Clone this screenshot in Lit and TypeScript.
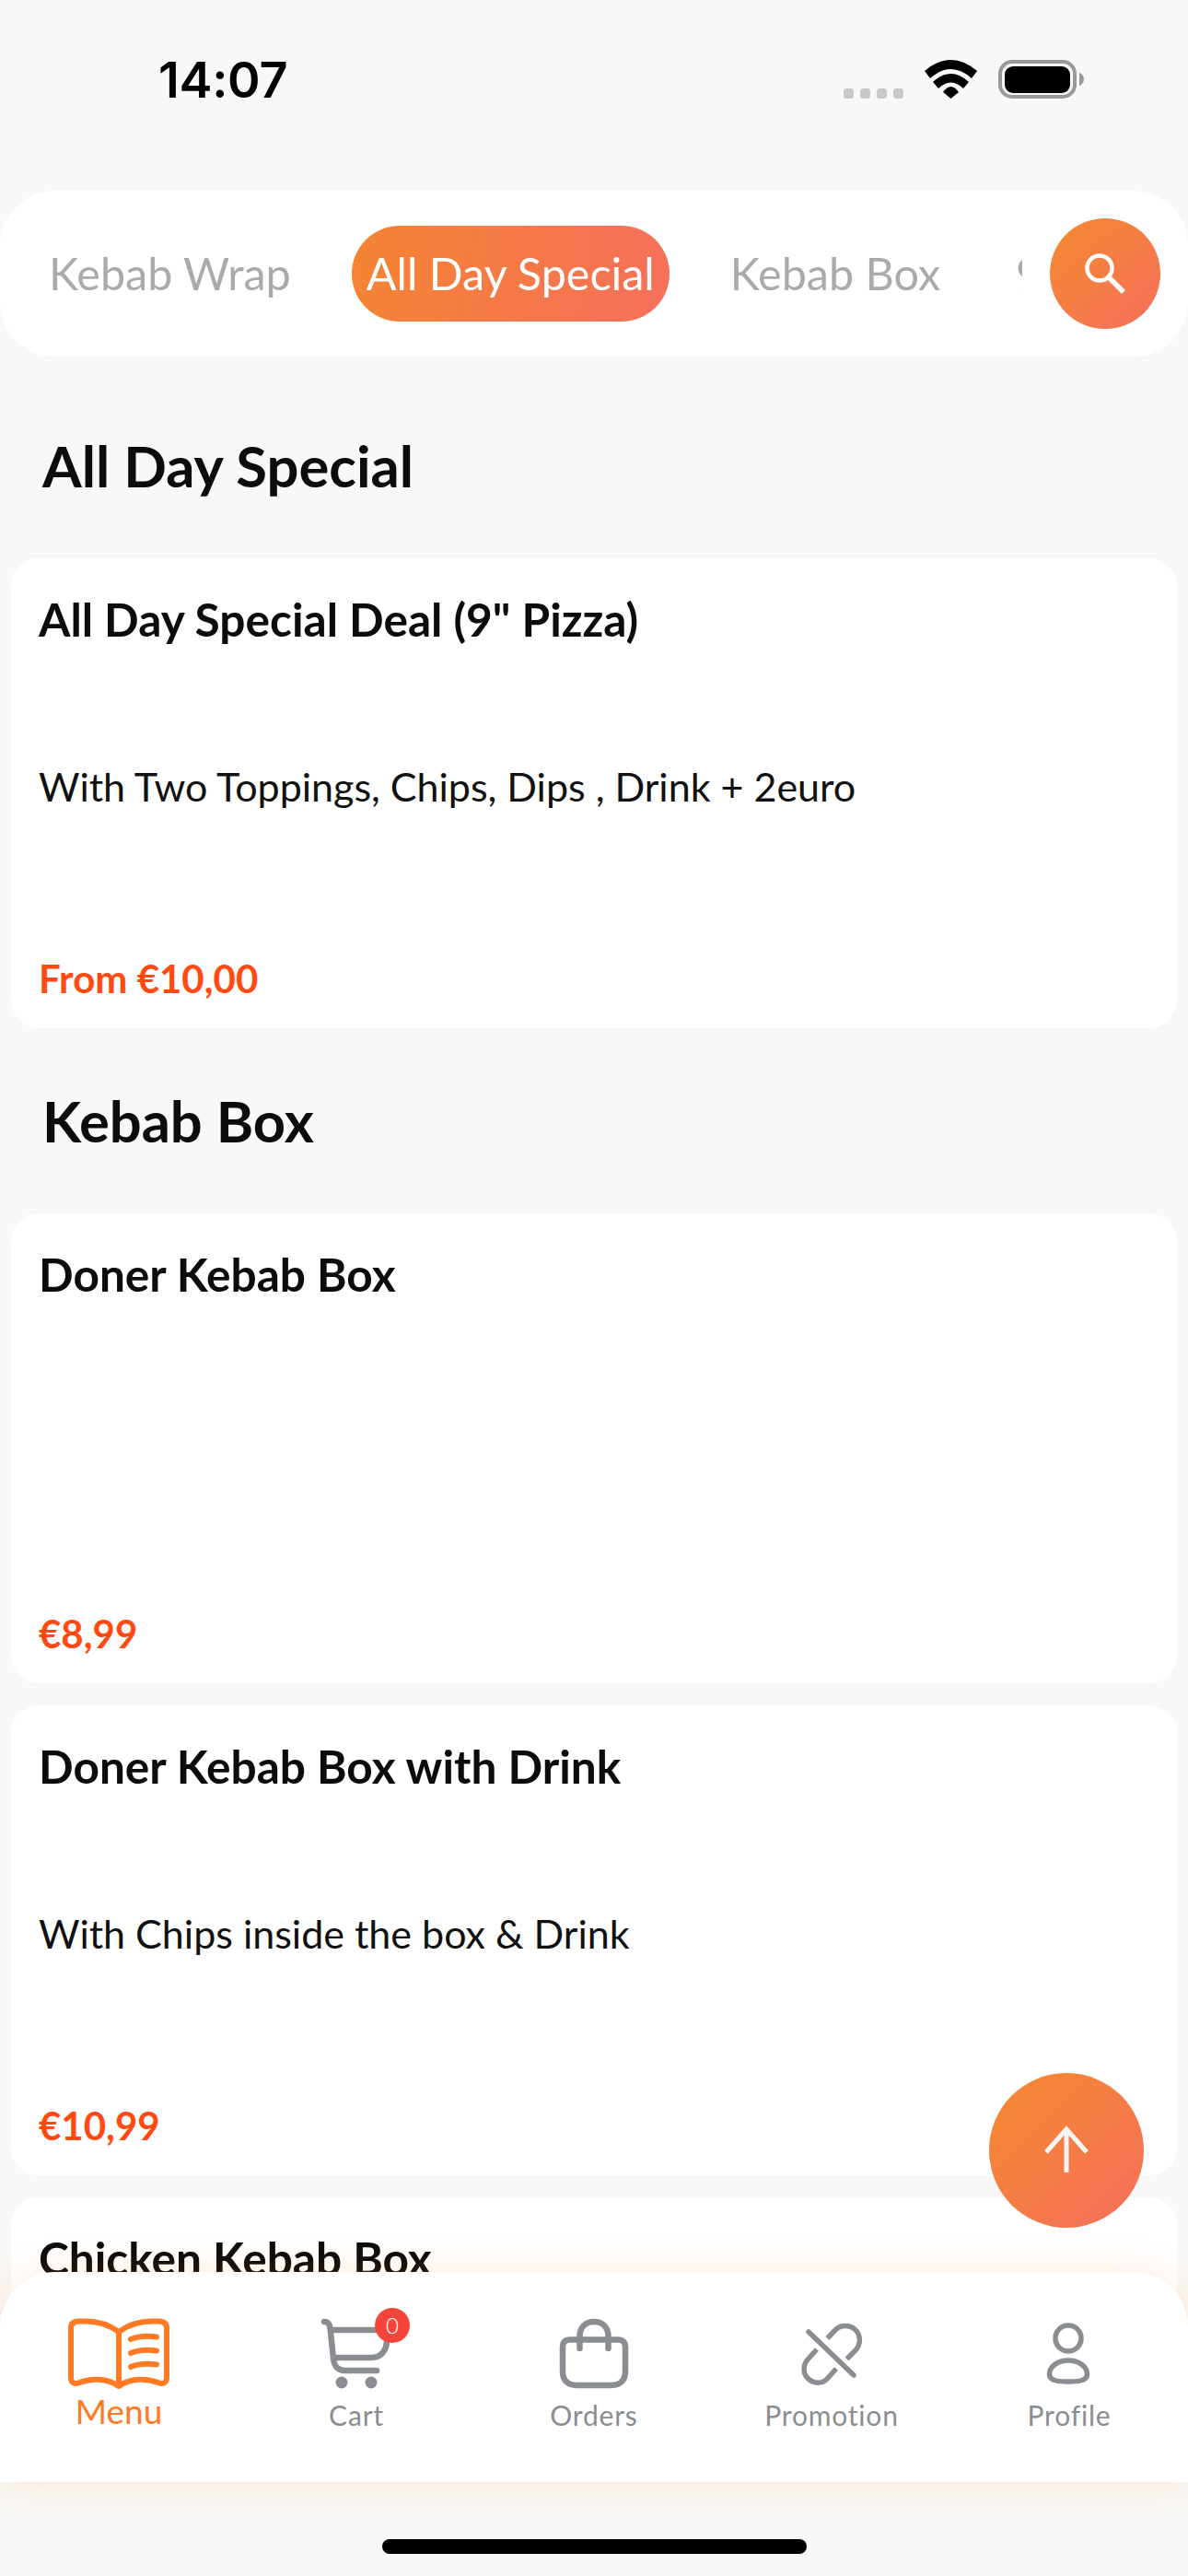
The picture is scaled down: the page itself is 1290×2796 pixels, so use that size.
import { LitElement, html, css, svg } from "lit";
import { customElement } from "lit/decorators.js";

const sections = [
  { name: "All Day Special", items: [
    { t: 'All Day Special Deal (9" Pizza)', d: "With Two Toppings, Chips, Dips , Drink + 2euro", p: "From €10,00" },
  ]},
  { name: "Kebab Box", items: [
    { t: "Doner Kebab Box", d: "", p: "€8,99" },
    { t: "Doner Kebab Box with Drink", d: "With Chips inside the box & Drink", p: "€10,99" },
    { t: "Chicken Kebab Box", d: "", p: "" },
  ]},
];

const icons: Record<string, unknown> = {
  menu: svg`<g fill="none" stroke="#ff7a22" stroke-width="6" stroke-linecap="round" stroke-linejoin="round">
    <path d="M129 2531 C118 2523 106 2519.500 93 2519.500 H86 C80 2519.500 77 2522 77 2527 V2581 C77 2586 81 2588 85 2586.500 C99 2581 116 2581 129 2590 C142 2581 159 2581 173 2586.500 C177 2588 181 2586 181 2581 V2527 C181 2522 178 2519.500 172 2519.500 H165 C152 2519.500 140 2523 129 2531 V2590"/>
    <path d="M142 2539 C150 2535.500 160 2535 170 2536.500"/><path d="M142 2554 C150 2550.500 160 2550 170 2551.500"/><path d="M142 2569 C150 2565.500 160 2565 170 2566.500"/></g>`,
  cart: svg`<g fill="none" stroke="#8a8d91" stroke-width="6.500" stroke-linecap="round" stroke-linejoin="round">
    <path d="M352 2520 C357 2520 358 2523 358.500 2527 L362 2560 C363 2569 367 2573 375 2573 H409"/>
    <path d="M360 2529 H420 V2540 C420 2551 414 2559 403 2559 H363"/></g>
    <circle cx="371" cy="2586" r="6.500" fill="#8a8d91"/><circle cx="403" cy="2586" r="6.500" fill="#8a8d91"/>`,
  orders: svg`<g fill="none" stroke="#8a8d91" stroke-width="6.500" stroke-linecap="round" stroke-linejoin="round">
    <path d="M619 2539.500 H671 C676 2539.500 679 2542 679 2547 V2574 C679 2584 673 2589 664 2589 H626 C617 2589 611 2584 611 2574 V2547 C611 2542 614 2539.500 619 2539.500 Z"/>
    <path d="M629.500 2549 V2536 C629.500 2526 636 2520 645 2520 C654 2520 660.500 2526 660.500 2536 V2549"/></g>`,
  promotion: svg`<g fill="none" stroke="#8a8d91" stroke-width="5.500" stroke-linejoin="round">
    <path d="M878 2531 L927 2578" stroke-linecap="round"/>
    <path d="M898.500 2538 L906 2530 C912 2523 922 2523 928 2528 C935 2534 935 2544 929 2551 L919.500 2560.500"/>
    <path d="M887 2550 L877 2561 C871 2568 872 2578 879 2583 C886 2588 894 2587 899 2581 L908 2571"/></g>`,
  profile: svg`<g fill="none" stroke="#8a8d91" stroke-width="5.500">
    <circle cx="1160" cy="2538" r="14"/>
    <path d="M1160 2562 C1148 2562 1139.500 2569 1139.500 2577 C1139.500 2583 1145 2585 1160 2585 C1175 2585 1180.500 2583 1180.500 2577 C1180.500 2569 1172 2562 1160 2562 Z"/></g>`,
};

const nav = [
  { k: "menu", l: "Menu", vb: "74 2515 110 79", w: 110, on: true },
  { k: "cart", l: "Cart", vb: "342 2515 90 79", w: 90, badge: true },
  { k: "orders", l: "Orders", vb: "600 2515 90 79", w: 90 },
  { k: "promotion", l: "Promotion", vb: "858 2515 90 79", w: 90 },
  { k: "profile", l: "Profile", vb: "1116 2515 90 79", w: 90 },
];

@customElement("app-root")
export class AppRoot extends LitElement {
  static styles = css`
    :host { position: relative; width: 1290px; height: 2796px; overflow: hidden; background: #f9f8f6; font-family: Lato, "Open Sans", sans-serif; color: #0c0c0c; display: flex; flex-direction: column; }
    .status { flex: none; height: 207px; display: flex; justify-content: space-between; box-sizing: border-box; padding: 0 110px 0 172px; }
    .time { font-family: Inter, "Liberation Sans", sans-serif; font-weight: 600; font-size: 54px; line-height: 50px; margin-top: 62px; letter-spacing: -0.3px; color: #000; }
    .sys { display: block; width: 270px; height: 60px; margin-top: 56px; }
    .tabs { flex: none; position: relative; height: 180px; background: #fff; border-radius: 60px; }
    .scroller { width: 1110px; height: 180px; overflow: hidden; box-sizing: border-box; padding-left: 37px; display: flex; align-items: center; gap: 50px; }
    .tab { flex: none; padding: 0 16px; height: 104px; line-height: 102px; font-size: 48.500px; color: #aaa; white-space: nowrap; border-radius: 52px; }
    .tab.on { color: #fff; background: linear-gradient(100deg, #f58432, #f5705c); }
    .search { position: absolute; top: 30px; right: 30px; width: 120px; height: 120px; border-radius: 50%; background: linear-gradient(135deg, #f58a2e, #f56f5c); display: flex; align-items: center; justify-content: center; }
    .search svg { width: 48px; height: 48px; }
    main { flex: 1; min-height: 0; overflow: hidden; padding: 42px 12px 0; }
    h2 { margin: 0; height: 177px; line-height: 152px; padding-left: 34px; font-size: 61.500px; font-weight: 700; color: #0c0c0c; }
    .card { box-sizing: border-box; height: 510px; margin-bottom: 24px; padding: 36px 31px 24px 30px; background: #fff; border-radius: 30px; display: flex; flex-direction: column; }
    .title { font-size: 49.600px; line-height: 60px; font-weight: 700; }
    .desc { font-size: 43px; line-height: 60px; margin-top: 122px; color: #111; }
    .price { font-size: 42px; line-height: 60px; font-weight: 700; color: #ff4b12; margin-top: auto; }
    .foot { flex: none; height: 102px; display: flex; justify-content: center; align-items: flex-end; }
    .home { width: 461px; height: 16px; margin-bottom: 24px; background: #000; border-radius: 8px; }
    .nav { position: absolute; left: 0; right: 0; bottom: 102px; height: 228px; background: #fff; border-radius: 60px 60px 0 0; box-shadow: 0 0 40px rgba(255, 125, 50, 0.16); display: grid; grid-template-columns: repeat(5, 1fr); }
    .item { position: relative; display: flex; flex-direction: column; align-items: center; padding-top: 49px; color: #8a8d91; font-size: 30px; line-height: 44px; letter-spacing: 0.8px; }
    .item svg { display: block; height: 79px; margin-bottom: 5px; }
    .item.on { color: #ff7a22; font-size: 37px; letter-spacing: 0; }
    .item.on span { margin-top: -4px; }
    .badge { position: absolute; left: 149px; top: 39px; width: 38px; height: 38px; border-radius: 50%; background: #f5453a; color: #fff; font-size: 24px; line-height: 38px; text-align: center; letter-spacing: 0; font-weight: 300; }
    .up { position: absolute; left: 1074px; top: 2250px; width: 168px; height: 168px; border-radius: 50%; background: linear-gradient(135deg, #f58a2e, #f56f5c); display: flex; align-items: center; justify-content: center; }
    .up svg { width: 60px; height: 60px; }
  `;

  render() {
    return html`
      <div class="status">
        <div class="time">14:07</div>
        <svg class="sys" viewBox="910 56 270 60" aria-hidden="true">
          ${[916, 934, 952, 970].map((x) => svg`<rect x=${x} y="96" width="11" height="11" rx="3.500" fill="#c8c8c8"/>`)}
          <path d="M1004 77 Q1032.500 53 1061 77 L1055 85 Q1032.500 65 1010 85 Z"/>
          <path d="M1013 89 Q1032.500 71 1052 89 L1046 96 Q1032.500 83 1019 96 Z"/>
          <path d="M1024 100 Q1032.500 88 1041 100 L1032.500 107 Z"/>
          <rect x="1086" y="67" width="81" height="38" rx="13" fill="none" stroke="#999" stroke-width="4"/>
          <rect x="1091" y="72" width="71" height="29" rx="9"/>
          <path d="M1172 79 C1175 80 1177 83 1177 86 C1177 89 1175 92 1172 93 Z" fill="#999"/>
        </svg>
      </div>
      <div class="tabs">
        <div class="scroller">
          <div class="tab">Kebab Wrap</div>
          <div class="tab on">All Day Special</div>
          <div class="tab">Kebab Box</div>
          <div class="tab">9" Pizza</div>
        </div>
        <div class="search">
          <svg viewBox="0 0 48 48" fill="none" stroke="#fff" aria-hidden="true">
            <circle cx="18" cy="18" r="13.500" stroke-width="4.500"/><path d="M28 28 L44 44" stroke-width="5.500"/>
          </svg>
        </div>
      </div>
      <main>
        ${sections.map((s) => html`
          <section>
            <h2>${s.name}</h2>
            ${s.items.map((i) => html`
              <div class="card">
                <div class="title">${i.t}</div>
                ${i.d ? html`<div class="desc">${i.d}</div>` : ""}
                <div class="price">${i.p}</div>
              </div>`)}
          </section>`)}
      </main>
      <div class="foot"><div class="home"></div></div>
      <div class="nav">
        ${nav.map((n) => html`
          <div class="item ${n.on ? "on" : ""}">
            <svg viewBox=${n.vb} style="width:${n.w}px" aria-hidden="true">${icons[n.k]}</svg>
            <span>${n.l}</span>
            ${n.badge ? html`<div class="badge">0</div>` : ""}
          </div>`)}
      </div>
      <div class="up">
        <svg viewBox="0 0 60 60" fill="none" stroke="#f5f5f5" stroke-width="5" aria-hidden="true">
          <path d="M30 54 V8"/><path d="M8 32 L30 7 L52 32"/>
        </svg>
      </div>
    `;
  }
}
